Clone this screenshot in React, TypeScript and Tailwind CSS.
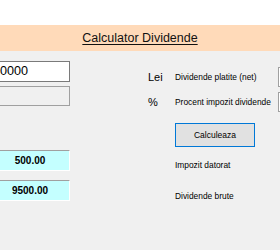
const font = { fontFamily: '"Liberation Sans", Arial, sans-serif' };

const OutputBox = ({ value }: { value: string }) => (
  <div className="h-[21px] w-[80px] shrink-0 flex items-center justify-center bg-[#c4ffff] border border-white border-t-[#a0a0a0] border-l-[#a0a0a0] text-[10px] font-bold text-black">
    {value}
  </div>
);

const InputRow = ({ unit, label }: { unit: string; label: string }) => (
  <div className="flex items-center h-[20px]">
    <span className="w-[27px] shrink-0 text-[11px] text-black">{unit}</span>
    <span className="w-[103px] shrink-0 text-[8.4px] text-black">{label}</span>
    <div className="w-[20px] h-[20px] shrink-0 bg-white border border-[#a0a0a0]" />
  </div>
);

const App = () => {
  return (
    <div className="w-[280px] h-[250px] overflow-hidden bg-[#f0f0f0]" style={font}>
      <div className="h-[25px] bg-white" />
      <div className="h-[26px] bg-[#ffdab9] flex items-center justify-center">
        <span className="text-[12.5px] text-[#111] underline underline-offset-[2px]">Calculator Dividende</span>
      </div>
      <div className="flex ml-[-10px]">
        {/* left column */}
        <div className="w-[80px] shrink-0 flex flex-col pt-[10px]">
          <div className="h-[21px] bg-white border border-[#7a7a7a] flex items-center pl-[2px] text-[12.6px] text-black">
            10000
          </div>
          <div className="h-[20px] mt-[4px] border border-[#a0a0a0] bg-[#f0f0f0]" />
          <div className="mt-[44px]">
            <OutputBox value="500.00" />
          </div>
          <div className="mt-[9px]">
            <OutputBox value="9500.00" />
          </div>
        </div>
        {/* right column */}
        <div className="ml-[78px] shrink-0 flex flex-col pt-[16px]">
          <InputRow unit="Lei" label="Dividende platite (net)" />
          <div className="mt-[5px]">
            <InputRow unit="%" label="Procent impozit dividende" />
          </div>
          <button className="mt-[11px] ml-[27px] w-[80px] h-[24px] bg-[#e1e1e1] border border-[#0078d7] text-[8.5px] text-black">
            Calculeaza
          </button>
          <div className="ml-[27px] mt-[13px] h-[10px] leading-[10px] text-[8.4px] text-black">Impozit datorat</div>
          <div className="ml-[27px] mt-[21px] h-[10px] leading-[10px] text-[8.4px] text-black">Dividende brute</div>
        </div>
      </div>
    </div>
  );
};

export default App;
